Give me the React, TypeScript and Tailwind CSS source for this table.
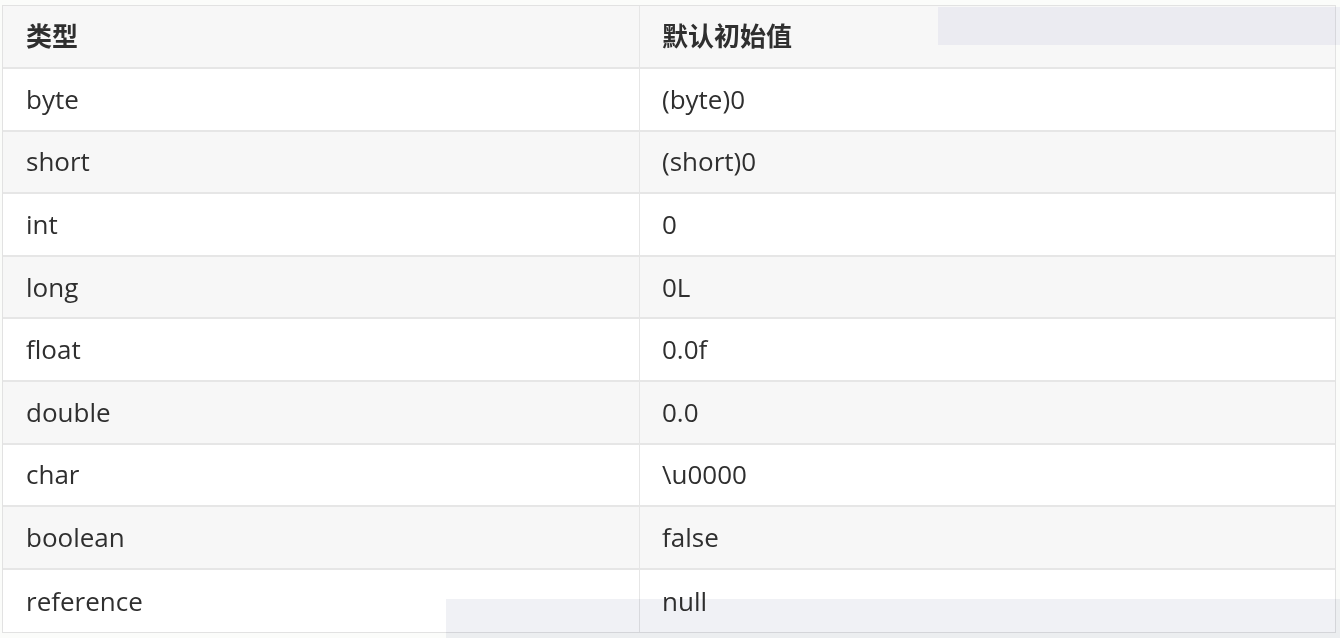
import * as React from "react"

const rows: [string, string][] = [
  ["byte", "(byte)0"],
  ["short", "(short)0"],
  ["int", "0"],
  ["long", "0L"],
  ["float", "0.0f"],
  ["double", "0.0"],
  ["char", "\\u0000"],
  ["boolean", "false"],
  ["reference", "null"],
]

export default function App() {
  return (
    <div
      className="relative w-[1340px] h-[638px] overflow-hidden bg-[#fbfcfa] pt-[5px] pl-[2px]"
      style={{ fontFamily: '"Open Sans", "Noto Sans CJK SC", sans-serif' }}
    >
      <div className="w-[1334px] border border-[#e2e2e2] bg-white text-[26px] text-[#2f2f2f]">
        <div className="flex h-[63px] bg-[#f7f7f7] border-b-2 border-[#e6e6e6] font-bold">
          <div className="w-[637px] flex items-center pl-[23px] border-r border-[#e6e6e6]">类型</div>
          <div className="flex-1 flex items-center pl-[22px]">默认初始值</div>
        </div>
        {rows.map(([type, value], i) => (
          <div
            key={type}
            className={
              "flex h-[62.6px] border-[#e6e6e6] " +
              (i % 2 === 1 ? "bg-[#f7f7f7] " : "bg-white ") +
              (i < rows.length - 1 ? "border-b-2" : "")
            }
          >
            <div className="w-[637px] flex items-center pl-[23px] border-r border-[#e6e6e6]">{type}</div>
            <div className="flex-1 flex items-center pl-[22px]">{value}</div>
          </div>
        ))}
      </div>

      {/* overlay artifacts */}
      <div className="absolute left-[938px] top-[7px] w-[402px] h-[38px] bg-[#f3f3f9] mix-blend-multiply" />
      <div className="absolute left-[446px] top-[599px] w-[894px] h-[39px] bg-[#f0f1f5] mix-blend-multiply" />
    </div>
  )
}
